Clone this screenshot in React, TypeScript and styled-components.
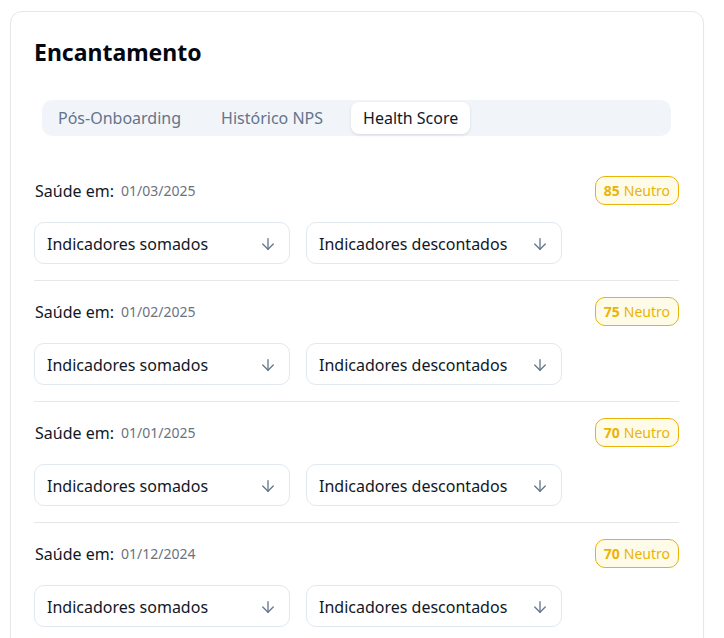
import styled, { createGlobalStyle } from 'styled-components';
import { ArrowDown } from 'lucide-react';

const GlobalStyle = createGlobalStyle`
  html, body {
    margin: 0;
    padding: 0;
    background: #ffffff;
    overflow: hidden;
  }
  body {
    font-family: 'Noto Sans', 'Open Sans', sans-serif;
    color: #111827;
  }
  * {
    box-sizing: border-box;
  }
`;

const Page = styled.div`
  padding: 11px 20px 0 10px;
`;

const Card = styled.section`
  width: 694px;
  border: 1px solid #e5e7eb;
  border-radius: 12px;
  padding: 24px 24px 24px 23px;
  background: #ffffff;
  box-shadow: 0 1px 2px rgba(15, 23, 42, 0.04);
`;

const Title = styled.h2`
  margin: 0 0 31px;
  font-size: 23px;
  line-height: 33px;
  font-weight: 700;
  color: #030712;
`;

const TabBar = styled.div`
  display: flex;
  gap: 16px;
  height: 36px;
  margin: 0 8px;
  padding: 2px 4px;
  border-radius: 10px;
  background: #f1f5f9;
`;

const Tab = styled.button<{ $active?: boolean }>`
  height: 32px;
  padding: 0 12px;
  border: none;
  border-radius: 8px;
  font-family: inherit;
  font-size: 16px;
  line-height: 32px;
  cursor: pointer;
  color: ${(p) => (p.$active ? '#0f172a' : '#64748b')};
  background: ${(p) => (p.$active ? '#ffffff' : 'transparent')};
  box-shadow: ${(p) => (p.$active ? '0 1px 3px rgba(15, 23, 42, 0.12)' : 'none')};
`;

const List = styled.div`
  margin-top: 24px;
  display: flex;
  flex-direction: column;
`;

const Item = styled.div`
  display: flex;
  flex-direction: column;
  gap: 17px;
  padding: 16px 0;
  border-bottom: 1px solid #e5e7eb;
`;

const Header = styled.div`
  display: flex;
  align-items: center;
  justify-content: space-between;
  height: 29px;
`;

const HealthLabel = styled.div`
  display: flex;
  align-items: center;
  gap: 7px;
`;

const Label = styled.span`
  font-size: 16px;
  color: #111827;
  padding-left: 1px;
`;

const DateText = styled.span`
  font-size: 14px;
  color: #6b7280;
`;

const Badge = styled.span`
  display: inline-flex;
  align-items: center;
  gap: 4px;
  height: 29px;
  padding: 0 8px;
  border: 1px solid #eab308;
  border-radius: 10px;
  background: #fefce8;
  color: #eab308;
  font-size: 14px;

  strong {
    font-weight: 700;
  }
`;

const Selects = styled.div`
  display: grid;
  grid-template-columns: 256px 256px;
  gap: 16px;
`;

const Select = styled.button`
  display: flex;
  align-items: center;
  justify-content: space-between;
  height: 42px;
  padding: 1px 12px 0 12px;
  border: 1px solid #e2e8f0;
  border-radius: 10px;
  background: #ffffff;
  font-family: inherit;
  font-size: 16px;
  color: #111827;
  cursor: pointer;

  svg {
    color: #64748b;
  }
`;

const tabs = ['Pós-Onboarding', 'Histórico NPS', 'Health Score'];

const scores = [
  { date: '01/03/2025', score: 85 },
  { date: '01/02/2025', score: 75 },
  { date: '01/01/2025', score: 70 },
  { date: '01/12/2024', score: 70 },
];

export default function App() {
  return (
    <>
      <GlobalStyle />
      <Page>
        <Card>
          <Title>Encantamento</Title>
          <TabBar>
            {tabs.map((t) => (
              <Tab key={t} $active={t === 'Health Score'}>
                {t}
              </Tab>
            ))}
          </TabBar>
          <List>
            {scores.map((s) => (
              <Item key={s.date}>
                <Header>
                  <HealthLabel>
                    <Label>Saúde em:</Label>
                    <DateText>{s.date}</DateText>
                  </HealthLabel>
                  <Badge>
                    <strong>{s.score}</strong>Neutro
                  </Badge>
                </Header>
                <Selects>
                  <Select>
                    Indicadores somados
                    <ArrowDown size={18} strokeWidth={1.75} />
                  </Select>
                  <Select>
                    Indicadores descontados
                    <ArrowDown size={18} strokeWidth={1.75} />
                  </Select>
                </Selects>
              </Item>
            ))}
          </List>
        </Card>
      </Page>
    </>
  );
}
